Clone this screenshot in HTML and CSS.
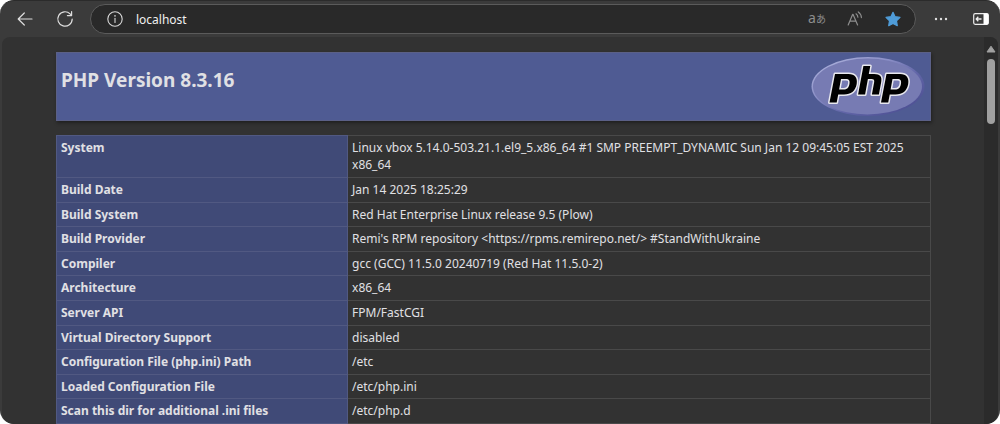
FILE: index.html
```
<!DOCTYPE html>
<html lang="en">
<head>
<meta charset="utf-8">
<meta name="viewport" content="width=device-width, initial-scale=1">
<title>PHP 8.3.16 - phpinfo()</title>
<link rel="stylesheet" href="styles.css">
</head>
<body>
<div class="window">
  <header class="toolbar">
    <button class="tool" type="button" aria-label="Back">
      <svg width="16" height="16" viewBox="0 0 16 16" fill="none" stroke="#dedede" stroke-width="1.2" stroke-linecap="round" stroke-linejoin="round"><path d="M15 8H1.2M7.3 2 1.2 8l6.1 6"/></svg>
    </button>
    <button class="tool" type="button" aria-label="Refresh">
      <svg width="18" height="18" viewBox="0 0 18 18" fill="none" stroke="#dedede" stroke-width="1.2" stroke-linecap="round" stroke-linejoin="round"><path d="M16.2 9a7.2 7.2 0 1 1-2.1-5.1l1.4 1.5M15.6 1.6v4h-4.2"/></svg>
    </button>
    <div class="address">
      <button class="tool" type="button" aria-label="Site information">
        <svg width="16" height="16" viewBox="0 0 16 16" fill="none" stroke="#d8d8d8" stroke-width="1.1" stroke-linecap="round"><circle cx="8" cy="8" r="7.2"/><path d="M8 7.4v4"/><circle cx="8" cy="4.9" r=".8" fill="#d8d8d8" stroke="none"/></svg>
      </button>
      <input class="url" type="text" value="localhost" aria-label="Address">
      <button class="tool translate" type="button" aria-label="Translate"><span class="latin">a</span><span class="kana">あ</span></button>
      <button class="tool" type="button" aria-label="Read aloud">
        <svg width="16" height="16" viewBox="0 0 16 16" fill="none" stroke="#8d8d8d" stroke-width="1.2" stroke-linecap="round" stroke-linejoin="round"><path d="M1.2 14 5.6 3.4h.5L10.600 14M2.8 10.200h6.200M9 2.800c1.200.9 1.800 2 1.900 3.400M11.300.9c2 1.400 3 3.300 3.100 5.700"/></svg>
      </button>
      <button class="tool" type="button" aria-label="Favorite">
        <svg width="16" height="16" viewBox="0 0 16 16" fill="#4f9cd8" stroke="#4f9cd8" stroke-width="1.2" stroke-linejoin="round"><path d="m8 1.3 2.1 4.4 4.9.7-3.5 3.4.8 4.9L8 12.4l-4.3 2.3.8-4.9L1 6.4l4.9-.7z"/></svg>
      </button>
    </div>
    <button class="tool more" type="button" aria-label="Settings and more">
      <svg width="14" height="4" viewBox="0 0 14 4" fill="#e2e2e2"><circle cx="2" cy="2" r="1.2"/><circle cx="7" cy="2" r="1.2"/><circle cx="12" cy="2" r="1.2"/></svg>
    </button>
    <button class="tool" type="button" aria-label="Sidebar">
      <svg width="16" height="14" viewBox="0 0 16 14"><rect x=".7" y="1.7" width="14.6" height="10.6" rx="1.5" fill="none" stroke="#ededed" stroke-width="1.2"/><path d="M10.5 1.5h3.5a1.5 1.5 0 0 1 1.5 1.5v8a1.5 1.5 0 0 1-1.5 1.5h-3.5z" fill="#fff"/><path d="M8.5 7H3.2M5.3 4.8 3.2 7l2.1 2.2" fill="none" stroke="#ededed" stroke-width="1.3"/></svg>
    </button>
  </header>
  <div class="viewport">
    <main class="page">
      <div class="banner">
        <h1 class="title">PHP Version 8.3.16</h1>
        <svg class="logo" role="img" aria-label="PHP logo" width="114" height="61" viewBox="0 0 114 61">
          <defs>
            <linearGradient id="rim" x1="0" y1="0" x2="1" y2="1"><stop offset="0" stop-color="#b6bbe2"/><stop offset=".35" stop-color="#8d91c8"/><stop offset=".6" stop-color="#6266a8"/><stop offset="1" stop-color="#45478b"/></linearGradient>
            <g id="letters">
              <path d="M24 18H37.500C44 18 46.800 22 45.700 28C44.400 35 40 38.500 33 38.500H27.200L25.700 46.500H18.500ZM30 23 28.100 33.500H32.500C36.200 33.500 37.700 31.900 38.400 28.300C39.100 24.600 38.200 23 34.800 23Z"/>
              <path d="M52.400 10H59.300L57.800 18H63.200C69.300 18 71.200 20.800 70.200 26L67.900 38.500H60.900L63.100 26.600C63.600 24.100 63 23.100 60.300 23.100H56.900L54.100 38.500H47.100Z"/>
              <path d="M75.500 18H89C95.500 18 98.300 22 97.200 28C95.900 35 91.500 38.500 84.500 38.500H78.700L77.200 46.500H70ZM81.500 23 79.600 33.500H84C87.700 33.500 89.200 31.900 89.900 28.300C90.600 24.600 89.700 23 86.300 23Z"/>
            </g>
          </defs>
          <ellipse cx="57" cy="30.500" rx="56.500" ry="29.500" fill="url(#rim)"/>
          <ellipse cx="56.500" cy="30.500" rx="54.500" ry="28" fill="#777bb3"/>
          <use href="#letters" fill="#e8e8ee" stroke="#e8e8ee" stroke-width="3" stroke-linejoin="round"/>
          <use href="#letters" fill="#000" fill-rule="evenodd"/>
        </svg>
      </div>
      <table class="info">
        <tbody>
          <tr><th scope="row">System</th><td>Linux vbox 5.14.0-503.21.1.el9_5.x86_64 #1 SMP PREEMPT_DYNAMIC Sun Jan 12 09:45:05 EST 2025 x86_64</td></tr>
          <tr><th scope="row">Build Date</th><td>Jan 14 2025 18:25:29</td></tr>
          <tr><th scope="row">Build System</th><td>Red Hat Enterprise Linux release 9.5 (Plow)</td></tr>
          <tr><th scope="row">Build Provider</th><td>Remi's RPM repository &lt;https://rpms.remirepo.net/&gt; #StandWithUkraine</td></tr>
          <tr><th scope="row">Compiler</th><td>gcc (GCC) 11.5.0 20240719 (Red Hat 11.5.0-2)</td></tr>
          <tr><th scope="row">Architecture</th><td>x86_64</td></tr>
          <tr><th scope="row">Server API</th><td>FPM/FastCGI</td></tr>
          <tr><th scope="row">Virtual Directory Support</th><td>disabled</td></tr>
          <tr><th scope="row">Configuration File (php.ini) Path</th><td>/etc</td></tr>
          <tr><th scope="row">Loaded Configuration File</th><td>/etc/php.ini</td></tr>
          <tr><th scope="row">Scan this dir for additional .ini files</th><td>/etc/php.d</td></tr>
        </tbody>
      </table>
    </main>
    <div class="scrollbar" aria-hidden="true">
      <svg width="10" height="8" viewBox="0 0 10 8" fill="#a0a0a0" stroke="#a0a0a0" stroke-linejoin="round"><path d="M5 1.200 9 7H1z"/></svg>
      <div class="thumb"></div>
    </div>
  </div>
</div>
</body>
</html>
```
FILE: styles.css
```
* { box-sizing: border-box; }

body {
  margin: 0;
  background: #fff;
  color: #e0e0e4;
  font: 12px/17px "Noto Sans", "Open Sans", sans-serif;
}

.window {
  display: flex;
  flex-direction: column;
  min-height: 100vh;
  overflow: hidden;
  border-top: 1px solid #2b2b2b;
  border-radius: 14px;
  background: #3b3b3b;
}

.toolbar {
  display: flex;
  align-items: center;
  gap: 16px;
  padding: 3px 10px 3px 16px;
}

.tool {
  display: flex;
  flex: none;
  align-items: center;
  justify-content: center;
  min-width: 18px;
  height: 24px;
  padding: 0;
  border: 0;
  background: none;
  color: #8d8d8d;
}

.toolbar > .tool + .tool { margin-left: 6px; }

.address {
  display: flex;
  flex: 1;
  align-items: center;
  gap: 20px;
  height: 30px;
  padding: 0 13px 0 15px;
  border: 1px solid #5b5b5b;
  border-radius: 15px;
  background: #292929;
}

.url {
  flex: 1;
  min-width: 0;
  margin-left: -8px;
  padding: 0;
  border: 0;
  outline: 0;
  background: none;
  color: #f0f0f0;
  font: 12px/17px "Noto Sans", "Open Sans", sans-serif;
}

.translate { align-items: baseline; }
.latin { font: 14px/22px "Noto Sans", sans-serif; }
.kana { font: 10px/22px "Noto Sans CJK JP", sans-serif; }

.viewport {
  display: flex;
  flex: 1;
  margin: 0 2px;
  overflow: hidden;
  border-radius: 8px 8px 12px 12px;
  background: #323232;
}

.page {
  display: flex;
  flex: 1;
  flex-direction: column;
  gap: 14px;
  padding: 15px 53px 0 54px;
}

.banner {
  display: flex;
  align-items: flex-start;
  justify-content: space-between;
  padding: 3px 5px 3px 4px;
  border: 1px solid #5b6086;
  background: #4f5b93;
  box-shadow: 1px 2px 3px #202020;
}

.title {
  margin: 11px 0 0;
  font-size: 19px;
  line-height: 26px;
}

.logo { display: block; }

.info {
  flex: 1;
  width: 100%;
  border-collapse: collapse;
  table-layout: fixed;
}

.info th,
.info td {
  padding: 3px 4px;
  border: 1px solid #494949;
  text-align: left;
  vertical-align: top;
}

.info th {
  width: 33.3%;
  border-color: #515982;
  background: #404a77;
}

.scrollbar {
  display: flex;
  flex: none;
  flex-direction: column;
  align-items: center;
  gap: 6px;
  width: 14px;
  padding-top: 8px;
  background: #2b2b2b;
}

.thumb {
  width: 8px;
  height: 65px;
  border-radius: 4px;
  background: #a0a0a0;
}
```
